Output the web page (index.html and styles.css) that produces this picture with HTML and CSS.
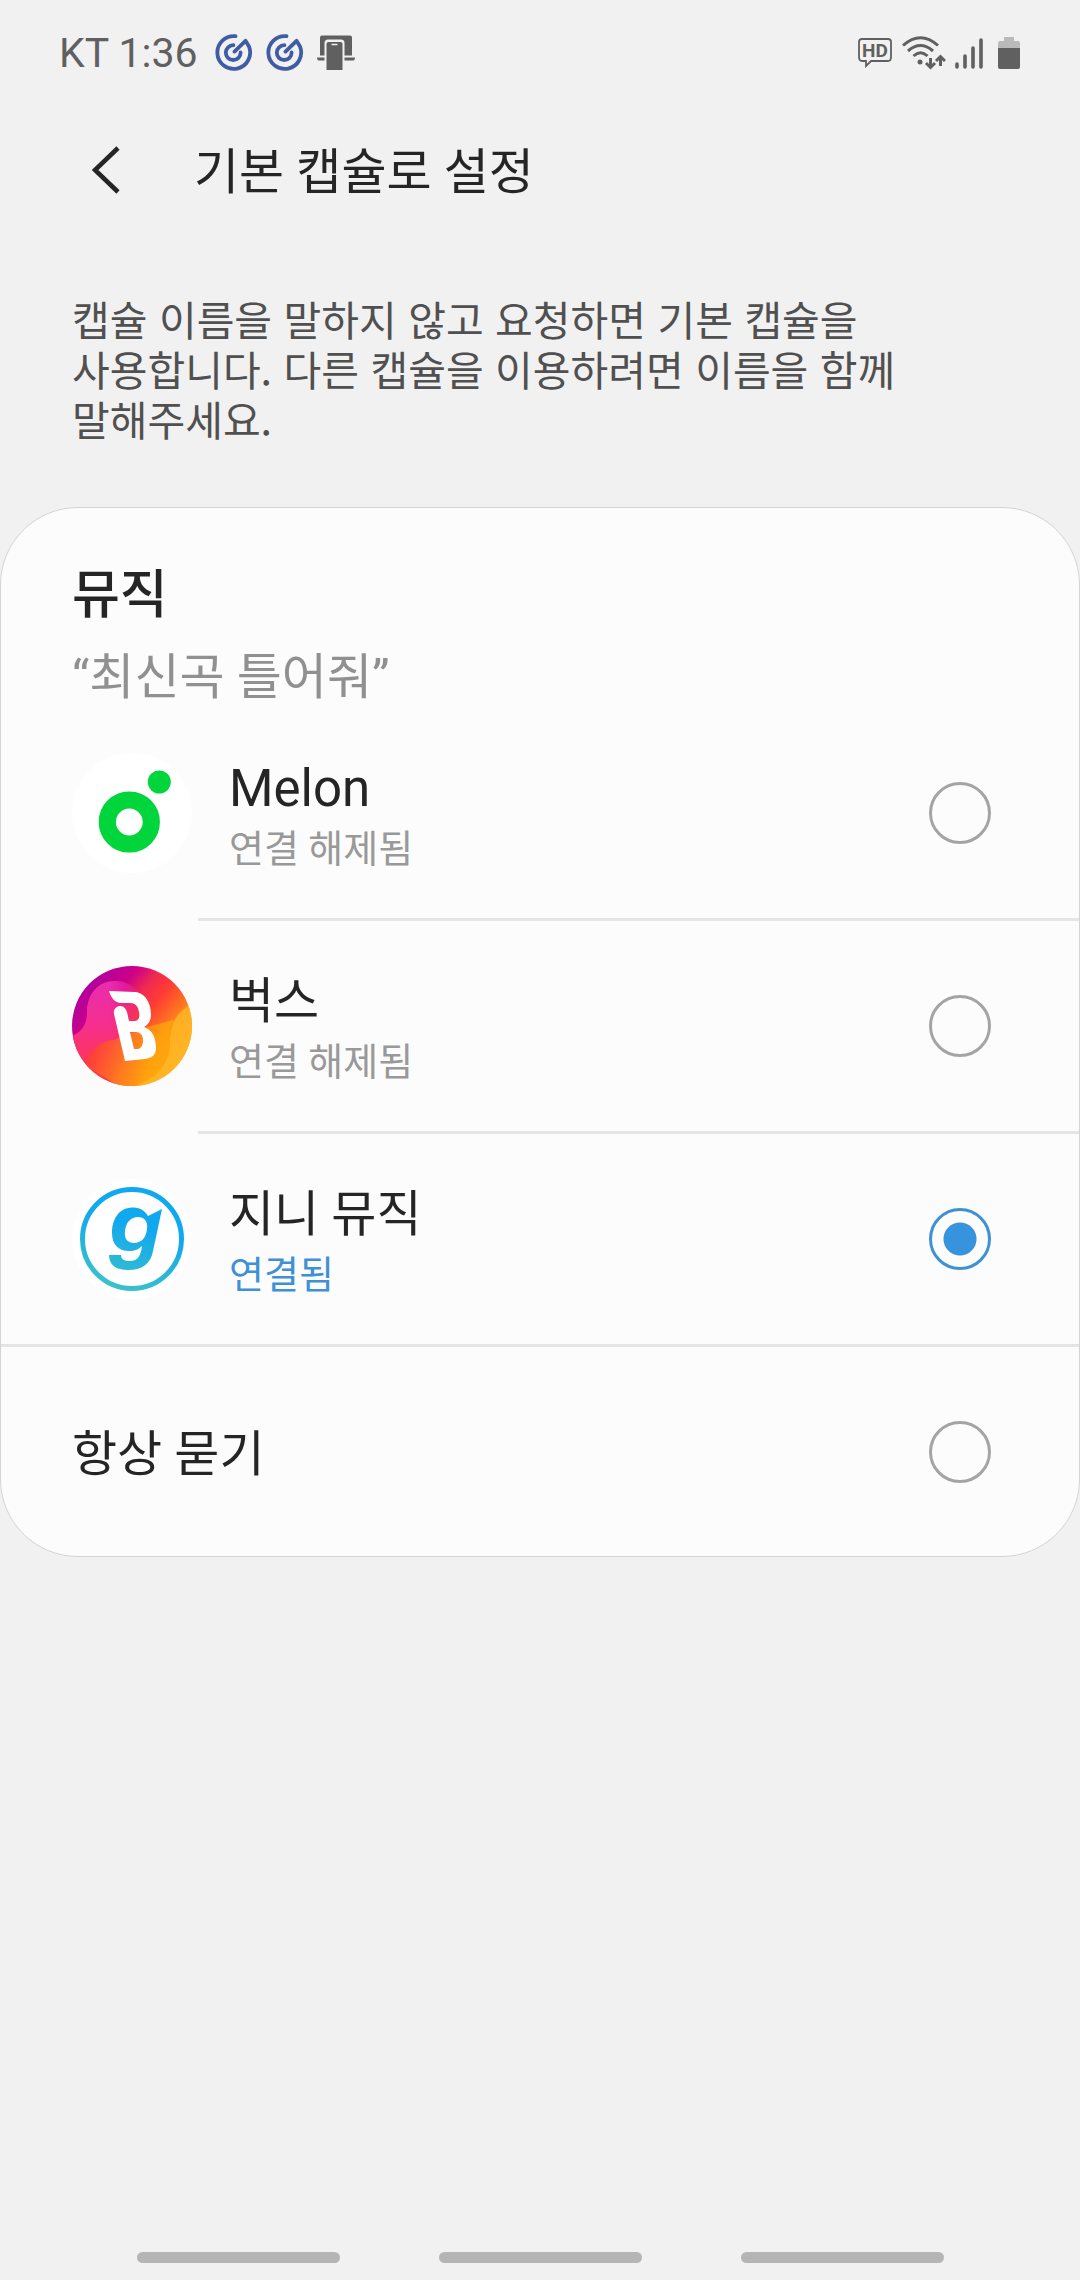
FILE: index.html
```html
<!DOCTYPE html>
<html lang="ko">
<head>
<meta charset="utf-8">
<meta name="viewport" content="width=device-width, initial-scale=1">
<title>기본 캡슐로 설정</title>
<link rel="stylesheet" href="styles.css">
</head>
<body>
<svg class="defs" aria-hidden="true">
  <defs>
    <symbol id="target" viewBox="0 0 38 38">
      <g fill="none" stroke="#3f5ca5" stroke-width="3.8" stroke-linecap="round" stroke-linejoin="round">
        <path d="M20.5 2.2A16.4 16.4 0 1 0 34 12.5L30.5 6.8L19.5 17.6"/>
        <path d="M18.4 11.2A7.4 7.4 0 1 0 25.6 18.5"/>
      </g>
    </symbol>
  </defs>
</svg>
<div class="screen">
  <div class="status">
    <div class="status-left">
      <span class="clock">KT 1:36</span>
      <svg width="38" height="38"><use href="#target"/></svg>
      <svg width="38" height="38"><use href="#target"/></svg>
      <svg width="38" height="36" viewBox="0 0 38 36" fill="#606060">
        <path d="M3 2.5Q3 0.500 5 0.500H33Q35 0.500 35 2.500V20.500H3ZM0 22.500H38Q38 25.500 36 25.500H2Q0 25.500 0 22.500Z"/>
        <path d="M7.500 28V8Q7.500 4.500 11 4.500H24Q27.500 4.500 27.500 8V28Z" fill="#f1f1f1"/>
        <path d="M9.500 9Q9.500 7 11.500 7H23.500Q25.500 7 25.500 9V35H9.500Z"/>
        <path d="M14.500 9.500H20.500" stroke="#f1f1f1" stroke-width="1.500"/>
      </svg>
    </div>
    <div class="status-right">
      <svg width="36" height="32" viewBox="0 0 36 32">
        <path d="M5 2H31Q34 2 34 5V20Q34 24 31 24H14L9 29V24H5Q2 24 2 20V5Q2 2 5 2Z" fill="none" stroke="#606060" stroke-width="1.800"/>
        <text class="hd" x="18" y="20" text-anchor="middle">HD</text>
      </svg>
      <svg width="44" height="34" viewBox="0 0 44 34">
        <g fill="none" stroke="#606060" stroke-width="3">
          <path d="M1 9.500Q18.500-6 36 9.500M6 15Q18.500 4 31 15M11.500 20Q18.500 13.500 25.500 20"/>
          <path d="M28.500 22V31M24 27L28.500 31.500L33 27M38.500 30V21M34 25L38.500 20.500L43 25"/>
        </g>
        <circle cx="18" cy="26" r="2.500" fill="#606060"/>
      </svg>
      <svg width="28" height="32" viewBox="0 0 28 32">
        <path d="M2 27V30M10 19V30M18 11V30M26 3V30" stroke="#606060" stroke-width="3.600" stroke-linecap="round"/>
      </svg>
      <svg class="battery" width="22" height="32" viewBox="0 0 22 32">
        <path d="M6 0H16V4H20Q22 4 22 6V12H0V6Q0 4 2 4H6Z" fill="#bababa"/>
        <path d="M0 11H22V30Q22 32 20 32H2Q0 32 0 30Z" fill="#606060"/>
      </svg>
    </div>
  </div>

  <header class="bar">
    <button class="back" type="button" aria-label="뒤로">
      <svg width="28" height="48" viewBox="0 0 28 48"><path d="M26 2L3 24L26 46" fill="none" stroke="#252525" stroke-width="4.600"/></svg>
    </button>
    <h1>기본 캡슐로 설정</h1>
  </header>

  <p class="intro">캡슐 이름을 말하지 않고 요청하면 기본 캡슐을 사용합니다. 다른 캡슐을 이용하려면 이름을 함께 말해주세요.</p>

  <main class="card">
    <h2>뮤직</h2>
    <p class="example">“최신곡 틀어줘”</p>

    <label class="option">
      <svg class="logo" viewBox="0 0 120 120">
        <circle cx="60" cy="60" r="60" fill="#fff"/>
        <circle cx="57.300" cy="69" r="22" fill="none" stroke="#00d53c" stroke-width="17.200"/>
        <circle cx="87.300" cy="29" r="11.500" fill="#00d53c"/>
      </svg>
      <span class="body">
        <span class="text"><span class="name" lang="en">Melon</span><span class="state">연결 해제됨</span></span>
        <input type="radio" name="capsule">
      </span>
    </label>

    <label class="option">
      <svg class="logo" viewBox="0 0 120 120">
        <defs>
          <linearGradient id="bugs" x1="0.120" y1="0.180" x2="0.880" y2="0.820">
            <stop offset="0" stop-color="#b0009c"/><stop offset="0.220" stop-color="#cc0088"/><stop offset="0.380" stop-color="#f02a50"/><stop offset="0.520" stop-color="#ff3b34"/><stop offset="0.780" stop-color="#ff8c18"/><stop offset="1" stop-color="#ffae1c"/>
          </linearGradient>
          <linearGradient id="bugsPink" x1="0.500" y1="0" x2="0.500" y2="1">
            <stop offset="0" stop-color="#e82cae"/><stop offset="0.400" stop-color="#f52e90"/><stop offset="0.750" stop-color="#fb365c"/><stop offset="1" stop-color="#ff3c3c"/>
          </linearGradient>
          <linearGradient id="bugsPinkFade" x1="0" y1="0" x2="1" y2="0">
            <stop offset="0.500" stop-color="#fff"/><stop offset="1" stop-color="#000"/>
          </linearGradient>
          <mask id="fade"><rect width="76" height="120" fill="url(#bugsPinkFade)"/></mask>
          <linearGradient id="bugsGold" gradientUnits="userSpaceOnUse" x1="22" y1="82" x2="76" y2="104">
            <stop offset="0" stop-color="#ff4030"/><stop offset="0.600" stop-color="#ff8818"/><stop offset="1" stop-color="#ffa60a"/>
          </linearGradient>
          <clipPath id="disc"><circle cx="60" cy="60" r="60"/></clipPath>
        </defs>
        <g clip-path="url(#disc)">
          <rect width="120" height="120" fill="url(#bugs)"/>
          <path d="M0 70C10 66 15 58 15 46C15 28 26 15 43 15C60 15 68 26 76 42V120H0Z" fill="url(#bugsPink)" mask="url(#fade)"/>
          <path d="M120 38C104 46 98 58 98 76C98 98 84 112 62 120H120Z" fill="#ffb825" opacity="0.800"/>
          <path d="M42 74C26 75 16 86 14 100L50 122C84 118 98 98 98 76C98 66 98 62 102 54L70 62Z" fill="url(#bugsGold)" opacity="0.800"/>
          <path fill="#fff" fill-rule="evenodd" d="M37 25L63 26C75 27 79 40 79 48C79 55 76 59 72 61C81 64 84 73 84 82C84 89 80 92 73 93L53 95L42 48C41 44 44 40 48 40C52 40 54 43 55 46L57 55H62C67 55 68 51 67 46C66 40 63 37 58 37H49C43 37 39 32 37 25ZM58 66L62 83H66C70 82 71 78 71 74C71 69 68 66 64 66Z"/>
        </g>
      </svg>
      <span class="body">
        <span class="text"><span class="name">벅스</span><span class="state">연결 해제됨</span></span>
        <input type="radio" name="capsule">
      </span>
    </label>

    <label class="option option-last">
      <svg class="logo" viewBox="0 0 120 120">
        <defs>
          <linearGradient id="genie" gradientUnits="userSpaceOnUse" x1="66" y1="46" x2="46" y2="106">
            <stop offset="0" stop-color="#10a8ee"/><stop offset="1" stop-color="#38c0cc"/>
          </linearGradient>
        </defs>
        <circle cx="60" cy="60" r="60" fill="#fff"/>
        <circle cx="60" cy="60" r="49.500" fill="none" stroke="url(#genie)" stroke-width="5"/>
        <path fill="url(#genie)" fill-rule="evenodd" d="M90 30L76 37C73 31 67 28.500 60 28.500C47 29 40 40 40 54C40 66 47 72 57 72C63 72 67 70 70 67C69 76 66 82 58 82C52 82 49 80 49 76H37C37 86 44 91 56 91C71 91 79 84 81 72ZM66 38C73 38 76 43 75 50C74 59 69 64 62 64C55 64 52 59 53 52C54 43 59 38 66 38Z"/>
      </svg>
      <span class="body">
        <span class="text"><span class="name">지니 뮤직</span><span class="state connected">연결됨</span></span>
        <input type="radio" name="capsule" checked>
      </span>
    </label>

    <label class="option always">
      <span class="name">항상 묻기</span>
      <input type="radio" name="capsule">
    </label>
  </main>

  <nav class="gestures" aria-label="내비게이션">
    <button type="button" aria-label="최근 앱"></button>
    <button type="button" aria-label="홈"></button>
    <button type="button" aria-label="뒤로 가기"></button>
  </nav>
</div>
</body>
</html>
```
FILE: styles.css
```css
* {
  box-sizing: border-box;
}

body {
  margin: 0;
  background: #f1f1f1;
  color: #252525;
  font-family: Roboto, "Noto Sans CJK KR", sans-serif;
}

h1,
h2,
p {
  margin: 0;
  font-weight: 400;
}

svg {
  display: block;
  flex: none;
}

.defs {
  position: absolute;
  width: 0;
  height: 0;
}

.screen {
  display: flex;
  flex-direction: column;
  min-height: 100vh;
}

.status {
  display: flex;
  justify-content: space-between;
  align-items: center;
  height: 106px;
  padding: 0 60px 0 59px;
  color: #606060;
}

.status-left {
  display: flex;
  align-items: center;
  gap: 13px;
}

.clock {
  margin-right: 4px;
  font-size: 41px;
  line-height: 48px;
}

.status-right {
  display: flex;
  align-items: center;
  gap: 9px;
}

.battery {
  margin-left: 6px;
}

.hd {
  fill: #606060;
  font-size: 19px;
  font-weight: 700;
}

.bar {
  display: flex;
  align-items: center;
  gap: 58px;
  height: 128px;
  padding: 0 72px;
}

.back {
  display: flex;
  justify-content: flex-end;
  width: 64px;
  padding: 0 16px;
  border: 0;
  background: none;
}

.bar h1 {
  padding-top: 5px;
  font-size: 49px;
  line-height: 64px;
}

.intro {
  padding: 59px 144px 64px 72px;
  color: #505050;
  font-family: "Noto Sans CJK KR", sans-serif;
  font-size: 41px;
  line-height: 50px;
  word-break: keep-all;
}

.card {
  padding-top: 54px;
  border: 1px solid #d4d4d4;
  border-radius: 78px;
  background: #fcfcfc;
}

.card h2 {
  padding: 0 71px;
  font-size: 52px;
  font-weight: 500;
  line-height: 68px;
}

.example {
  padding: 18px 71px 0;
  color: #909090;
  font-size: 49px;
  line-height: 60px;
}

.option {
  display: flex;
  align-items: stretch;
  gap: 6px;
  padding-left: 71px;
}

.logo {
  align-self: center;
  width: 120px;
  height: 120px;
  margin-bottom: 3px;
}

.body {
  display: flex;
  flex: 1;
  justify-content: space-between;
  align-items: center;
  min-height: 213px;
  padding: 0 88px 0 31px;
  border-bottom: 3px solid #e5e5e5;
}

.option-last {
  border-bottom: 3px solid #e5e5e5;
}

.option-last .body {
  min-height: 210px;
  border-bottom: 0;
}

.option-last .logo {
  margin-bottom: 0;
}

.text {
  display: flex;
  flex-direction: column;
  padding-top: 8px;
}

.name {
  font-size: 49px;
  line-height: 64px;
}

.name:lang(en) {
  font-size: 51px;
}

.state {
  color: #999;
  font-size: 38px;
  line-height: 56px;
}

.connected {
  color: #3f91d6;
}

.always {
  justify-content: space-between;
  align-items: center;
  min-height: 209px;
  padding-right: 88px;
}

.always .name {
  padding-top: 6px;
}

input[type="radio"] {
  appearance: none;
  flex: none;
  width: 62px;
  height: 62px;
  margin: 0;
  border: 3px solid #a4a4a4;
  border-radius: 50%;
}

input[type="radio"]:checked {
  border-color: #3f91d6;
  background: radial-gradient(circle, #3893de 16px, transparent 17px);
}

.gestures {
  display: flex;
  justify-content: center;
  gap: 99px;
  margin-top: auto;
  padding-bottom: 17px;
}

.gestures button {
  width: 203px;
  height: 11px;
  padding: 0;
  border: 0;
  border-radius: 6px;
  background: #b5b5b5;
}
```
